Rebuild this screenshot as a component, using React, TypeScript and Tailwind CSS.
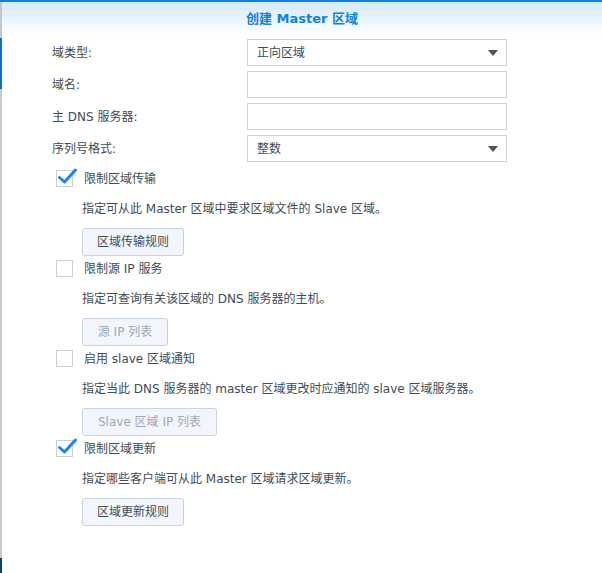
// Synology DNS Server: "create master zone" dialog page.

const FONT = { fontFamily: '"DejaVu Sans", "Noto Sans CJK SC", sans-serif' };

type Block = {
  label: string;
  checked: boolean;
  hint: string;
  button: string;
  buttonWidth: string;
  disabled: boolean;
};

const BLOCKS: Block[] = [
  {
    label: "限制区域传输",
    checked: true,
    hint: "指定可从此 Master 区域中要求区域文件的 Slave 区域。",
    button: "区域传输规则",
    buttonWidth: "w-[102px]",
    disabled: false,
  },
  {
    label: "限制源 IP 服务",
    checked: false,
    hint: "指定可查询有关该区域的 DNS 服务器的主机。",
    button: "源 IP 列表",
    buttonWidth: "w-[86px]",
    disabled: true,
  },
  {
    label: "启用 slave 区域通知",
    checked: false,
    hint: "指定当此 DNS 服务器的 master 区域更改时应通知的 slave 区域服务器。",
    button: "Slave 区域 IP 列表",
    buttonWidth: "w-[135px]",
    disabled: true,
  },
  {
    label: "限制区域更新",
    checked: true,
    hint: "指定哪些客户端可从此 Master 区域请求区域更新。",
    button: "区域更新规则",
    buttonWidth: "w-[102px]",
    disabled: false,
  },
];

export default function App() {
  return (
    <div className="flex h-[573px] w-full bg-white text-[#414b55]" style={FONT}>
      <EdgeStrip />
      <div className="flex min-w-0 flex-1 flex-col">
        <div className="h-[2px] bg-[#0c7fe0]" />
        <header className="flex h-[33px] items-center justify-center bg-gradient-to-b from-[#d5e8fb] to-white">
          <h1 className="text-[13px] font-bold text-[#0a84e3]">创建 Master 区域</h1>
        </header>

        <div className="flex flex-col gap-[5px] pl-[50px] pt-[4px]">
          <FormRow label="域类型:">
            <Select value="正向区域" />
          </FormRow>
          <FormRow label="域名:">
            <TextInput />
          </FormRow>
          <FormRow label="主 DNS 服务器:">
            <TextInput />
          </FormRow>
          <FormRow label="序列号格式:">
            <Select value="整数" />
          </FormRow>
        </div>

        <div className="mt-[8px] flex flex-col pl-[54px]">
          {BLOCKS.map((b) => (
            <OptionBlock key={b.label} block={b} />
          ))}
        </div>
      </div>
    </div>
  );
}

// The desktop behind the window peeks out along the left edge.
function EdgeStrip() {
  return (
    <div className="flex w-[2px] flex-col">
      <div className="h-[2px] bg-[#0c7fe0]" />
      <div className="h-[36px] bg-[#c4c6c8]" />
      <div className="h-[51px] bg-[#0b6fcf]" />
      <div className="flex-1 bg-[#c9cacb]" />
      <div className="h-[15px] bg-[#0a3f82]" />
    </div>
  );
}

function FormRow({ label, children }: { label: string; children: React.ReactNode }) {
  return (
    <div className="flex h-[27px] items-center">
      <span className="w-[195px] text-[12px]">{label}</span>
      {children}
    </div>
  );
}

function TextInput() {
  return <div className="h-[27px] w-[260px] border border-[#c7d3df] bg-white" />;
}

function Select({ value }: { value: string }) {
  return (
    <div className="flex h-[27px] w-[260px] items-center justify-between border border-[#c7d3df] bg-white pl-[9px] pr-[8px]">
      <span className="text-[12px]">{value}</span>
      <svg width="10" height="6" viewBox="0 0 10 6" aria-hidden>
        <path d="M0 0H10L5 6Z" fill="#4a5460" />
      </svg>
    </div>
  );
}

function OptionBlock({ block }: { block: Block }) {
  return (
    <div className="mb-[4px] flex flex-col">
      <div className="flex h-[17px] items-center gap-[11px]">
        <Checkbox checked={block.checked} />
        <span className="text-[12px]">{block.label}</span>
      </div>
      <p className="ml-[26px] mt-[14px] h-[17px] text-[12px] leading-[17px]">{block.hint}</p>
      <button
        type="button"
        className={`ml-[26px] mt-[10px] flex h-[28px] items-center justify-center rounded-[3px] border border-[#c6d3e1] bg-[#f2f6fc] text-[12px] ${block.buttonWidth} ${
          block.disabled ? "text-[#9ea8b3]" : "text-[#414b55]"
        }`}
      >
        {block.button}
      </button>
    </div>
  );
}

function Checkbox({ checked }: { checked: boolean }) {
  return (
    <span className="relative inline-block h-[17px] w-[17px] shrink-0 border border-[#c8d1da] bg-white">
      {checked ? (
        <svg
          className="absolute left-[1px] top-[-3px]"
          width="19"
          height="17"
          viewBox="0 0 19 17"
          aria-hidden
        >
          <path
            d="M1.5 9.5L6.5 14L17.5 2"
            fill="none"
            stroke="#1388f5"
            strokeWidth="3"
            strokeLinecap="round"
            strokeLinejoin="round"
          />
        </svg>
      ) : null}
    </span>
  );
}
